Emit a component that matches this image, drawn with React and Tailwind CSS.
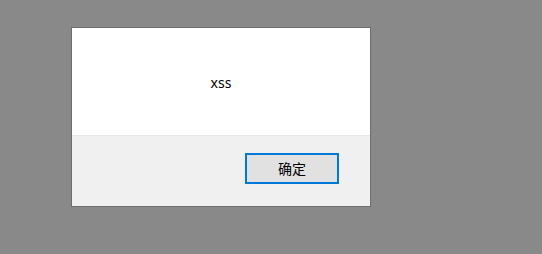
export default function App() {
  return (
    <div className="min-h-[254px] w-full bg-[#898989] pl-[71px] pt-[27px] font-['Noto_Sans','Noto_Sans_CJK_SC',sans-serif]">
      <div className="w-[300px] border border-[#6e6e6e] bg-white">
        <div className="flex h-[107px] items-center justify-center pt-[1px] text-[14px] text-black">
          xss
        </div>
        <div className="flex h-[71px] justify-end border-t border-[#e8e8e8] bg-[#f0f0f0] pr-[31px] pt-[17px]">
          <button className="flex h-[31px] w-[94px] items-center justify-center border-2 border-[#0078d7] bg-[#e1e1e1] text-[14px] text-black">
            确定
          </button>
        </div>
      </div>
    </div>
  );
}
